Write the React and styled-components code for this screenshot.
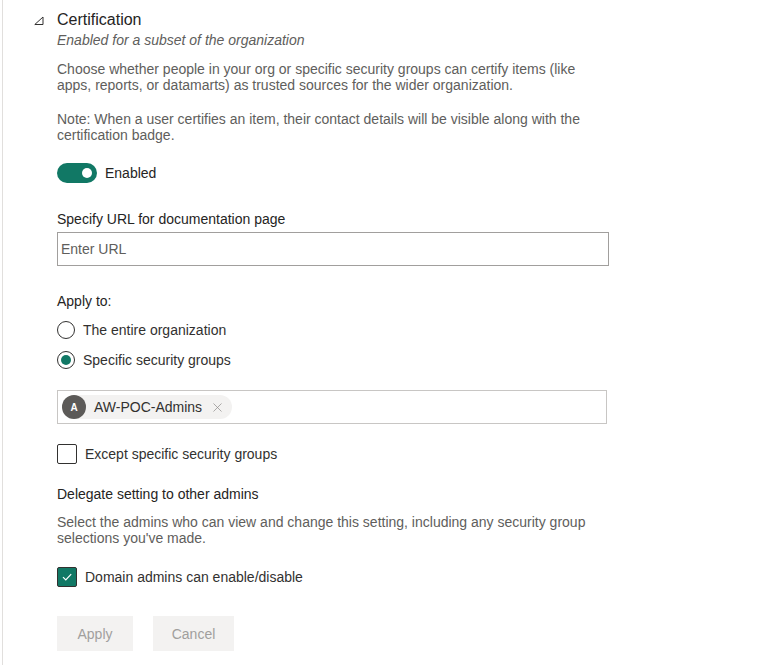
import styled, { createGlobalStyle } from "styled-components";
import { X } from "lucide-react";

const GlobalStyle = createGlobalStyle`
  html, body {
    margin: 0;
    padding: 0;
    background: #ffffff;
  }
  body {
    font-family: "Segoe UI", "Liberation Sans", Arial, sans-serif;
    color: #252423;
  }
`;

const Page = styled.div`
  min-height: 665px;
  border-left: 1px solid #e1dfdd;
  margin-left: 2px;
  padding: 10px 0 14px 31px;
  box-sizing: border-box;
`;

const Header = styled.div`
  display: flex;
  align-items: flex-start;
  gap: 13px;
`;

const Caret = styled.svg`
  width: 10px;
  height: 10px;
  margin-top: 6px;
  flex-shrink: 0;
`;

const Body = styled.div`
  width: 552px;
  display: flex;
  flex-direction: column;
`;

const Title = styled.div`
  font-size: 16px;
  line-height: 20px;
  color: #252423;
`;

const Subtitle = styled.div`
  font-size: 14px;
  font-style: italic;
  line-height: 20px;
  color: #605e5c;
`;

const Text = styled.p`
  margin: ${(p) => p.$mt || 0}px 0 0;
  font-size: 14px;
  line-height: 16px;
  color: #605e5c;
  width: 530px;
`;

const Label = styled.div`
  margin-top: ${(p) => p.$mt || 0}px;
  font-size: 14px;
  line-height: 20px;
  color: #252423;
`;

const Row = styled.label`
  display: flex;
  align-items: center;
  gap: ${(p) => p.$gap || 8}px;
  margin-top: ${(p) => p.$mt || 0}px;
  font-size: 14px;
  line-height: 20px;
  color: ${(p) => p.$color || "#252423"};
`;

const Toggle = styled.span`
  position: relative;
  width: 40px;
  height: 20px;
  border-radius: 10px;
  background: #117865;
  flex-shrink: 0;

  &::after {
    content: "";
    position: absolute;
    right: 5px;
    top: 5px;
    width: 10px;
    height: 10px;
    border-radius: 50%;
    background: #ffffff;
  }
`;

const Input = styled.div`
  margin-top: 3px;
  height: 34px;
  box-sizing: border-box;
  border: 1px solid #a19f9d;
  display: flex;
  align-items: center;
  padding: 0 3px;
  font-size: 14px;
  color: #605e5c;
`;

const Radio = styled.span`
  width: 18px;
  height: 18px;
  box-sizing: border-box;
  border-radius: 50%;
  border: 1px solid #323130;
  display: flex;
  align-items: center;
  justify-content: center;
  flex-shrink: 0;

  &::after {
    content: "";
    width: 10px;
    height: 10px;
    border-radius: 50%;
    background: ${(p) => (p.$checked ? "#117865" : "transparent")};
  }
`;

const Picker = styled.div`
  margin-top: 20px;
  height: 34px;
  width: 550px;
  box-sizing: border-box;
  border: 1px solid #c8c6c4;
  display: flex;
  align-items: center;
  padding: 0 4px;
`;

const Chip = styled.div`
  display: flex;
  align-items: center;
  height: 24px;
  border-radius: 12px;
  background: #f3f2f1;
  padding-right: 7px;
  font-size: 14px;
  color: #323130;
`;

const Avatar = styled.span`
  width: 24px;
  height: 24px;
  border-radius: 50%;
  background: #5c5a58;
  color: #ffffff;
  font-size: 10px;
  font-weight: bold;
  display: flex;
  align-items: center;
  justify-content: center;
  margin-right: 8px;
`;

const Remove = styled.span`
  margin-left: 8px;
  display: flex;
  color: #8a8886;
`;

const Checkbox = styled.span`
  width: 20px;
  height: 20px;
  box-sizing: border-box;
  border: 1px solid #323130;
  border-radius: 2px;
  background: ${(p) => (p.$checked ? "#117865" : "#ffffff")};
  display: flex;
  align-items: center;
  justify-content: center;
  flex-shrink: 0;
`;

const Buttons = styled.div`
  display: flex;
  gap: 20px;
  margin-top: 29px;
`;

const Button = styled.button`
  height: 35px;
  width: ${(p) => p.$w}px;
  border: none;
  background: #f3f2f1;
  color: #a19f9d;
  font-family: inherit;
  font-size: 14px;
  padding: 0;
`;

export default function App() {
  return (
    <>
      <GlobalStyle />
      <Page>
        <Header>
          <Caret viewBox="0 0 10 10">
            <path d="M9 1 L9 8.5 L0.8 8.5 Z" fill="none" stroke="#323130" strokeWidth="1" />
          </Caret>
          <Body>
            <Title>Certification</Title>
            <Subtitle>Enabled for a subset of the organization</Subtitle>
            <Text $mt={11}>
              Choose whether people in your org or specific security groups can certify items (like
              apps, reports, or datamarts) as trusted sources for the wider organization.
            </Text>
            <Text $mt={18}>
              Note: When a user certifies an item, their contact details will be visible along with the
              certification badge.
            </Text>
            <Row $mt={20}>
              <Toggle />
              Enabled
            </Row>
            <Label $mt={26}>Specify URL for documentation page</Label>
            <Input>Enter URL</Input>
            <Label $mt={25}>Apply to:</Label>
            <Row $mt={9} $color="#323130">
              <Radio />
              The entire organization
            </Row>
            <Row $mt={10} $color="#323130">
              <Radio $checked />
              Specific security groups
            </Row>
            <Picker>
              <Chip>
                <Avatar>A</Avatar>
                AW-POC-Admins
                <Remove>
                  <X size={15} strokeWidth={1.1} />
                </Remove>
              </Chip>
            </Picker>
            <Row $mt={20} $gap={8} $color="#323130">
              <Checkbox />
              Except specific security groups
            </Row>
            <Label $mt={20}>Delegate setting to other admins</Label>
            <Text $mt={10}>
              Select the admins who can view and change this setting, including any security group
              selections you've made.
            </Text>
            <Row $mt={21} $color="#323130">
              <Checkbox $checked>
                <svg width="12" height="12" viewBox="0 0 12 12">
                  <path d="M2 6.2 L4.8 9 L10.2 3.2" fill="none" stroke="#ffffff" strokeWidth="1.2" />
                </svg>
              </Checkbox>
              Domain admins can enable/disable
            </Row>
            <Buttons>
              <Button $w={76}>Apply</Button>
              <Button $w={81}>Cancel</Button>
            </Buttons>
          </Body>
        </Header>
      </Page>
    </>
  );
}
